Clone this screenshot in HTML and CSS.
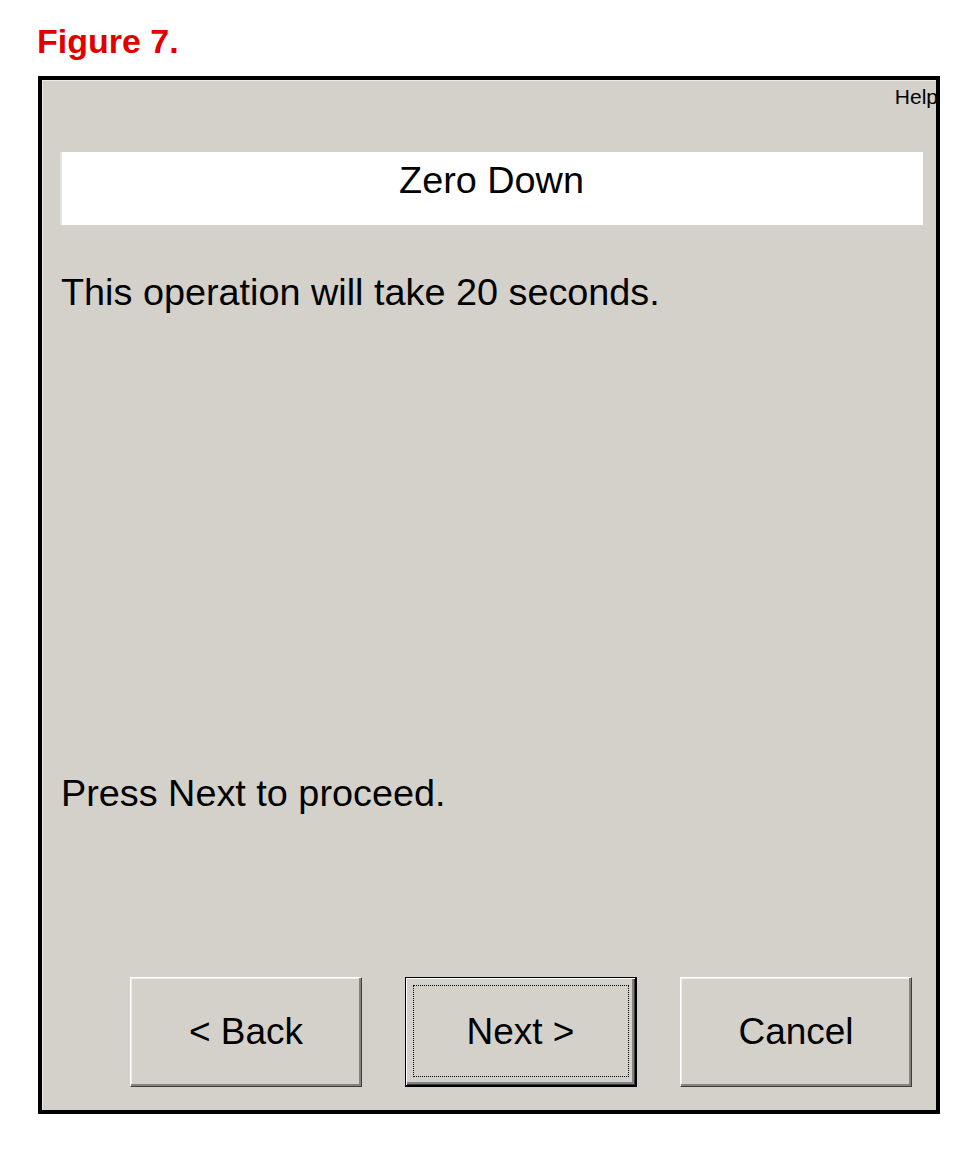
FILE: index.html
```html
<!DOCTYPE html>
<html lang="en">
<head>
    <meta charset="UTF-8">
    <title>Figure 7 - Zero Down</title>
    <link rel="stylesheet" href="styles.css">
</head>
<body>

    <div class="caption">Figure 7.</div>

    <div class="window">
        <div class="help-row"><span class="help">Help</span></div>

        <div class="title-bar">Zero Down</div>

        <p class="message">This operation will take 20 seconds.</p>
        <p class="message prompt">Press Next to proceed.</p>

        <div class="buttons">
            <button class="btn">&lt; Back</button>
            <button class="btn btn-default">Next &gt;</button>
            <button class="btn">Cancel</button>
        </div>
    </div>

</body>
</html>
```

FILE: styles.css
```css
body {
    margin: 0;
    background: #fff;
    font-family: "Liberation Sans", Arial, sans-serif;
    color: #000;
}

.caption {
    margin: 22px 0 16px 37px;
    font-size: 34px;
    line-height: 38px;
    font-weight: bold;
    color: #e00000;
}

.window {
    box-sizing: border-box;
    width: 902px;
    height: 1038px;
    margin-left: 38px;
    border: 4px solid #000;
    background-color: #d4d0ca;
    box-shadow: inset 1px 1px 0 #ecebe7;
    overflow: hidden;
}

.help-row {
    padding-top: 5px;
    height: 24px;
    text-align: right;
    font-size: 21px;
    line-height: 24px;
    margin-right: -2px;
}

.title-bar {
    margin: 43px 13px 0 18px;
    height: 73px;
    box-sizing: border-box;
    padding-top: 7px;
    background: #fff;
    text-align: center;
    font-size: 37.8px;
    line-height: 42px;
    box-shadow: inset 2px 0 0 #e6e4e0;
}

.message {
    margin: 46px 0 0 19px;
    font-size: 37.8px;
    line-height: 42px;
}

.prompt {
    margin-top: 459px;
}

.buttons {
    display: flex;
    gap: 43px;
    margin-top: 163px;
    padding-left: 88px;
}

.btn {
    position: relative;
    box-sizing: border-box;
    width: 232px;
    height: 110px;
    padding: 0;
    font-family: "Liberation Sans", Arial, sans-serif;
    font-size: 37px;
    color: #000;
    background-color: #d4d0ca;
    border: 1px solid;
    border-color: #fff #3c3c3c #3c3c3c #fff;
    box-shadow: inset -2px -2px 0 #85837f, inset 1px 1px 0 #eeece8;
}

.btn-default {
    border: 1px solid #000;
    border-width: 1px 2px 2px 1px;
    box-shadow: inset 1px 1px 0 #fff, inset -1px -1px 0 #3c3c3c, inset -3px -3px 0 #85837f;
}

.btn-default::after {
    content: "";
    position: absolute;
    top: 7px;
    left: 7px;
    right: 6px;
    bottom: 8px;
    border: 1px dotted #000;
}
```
